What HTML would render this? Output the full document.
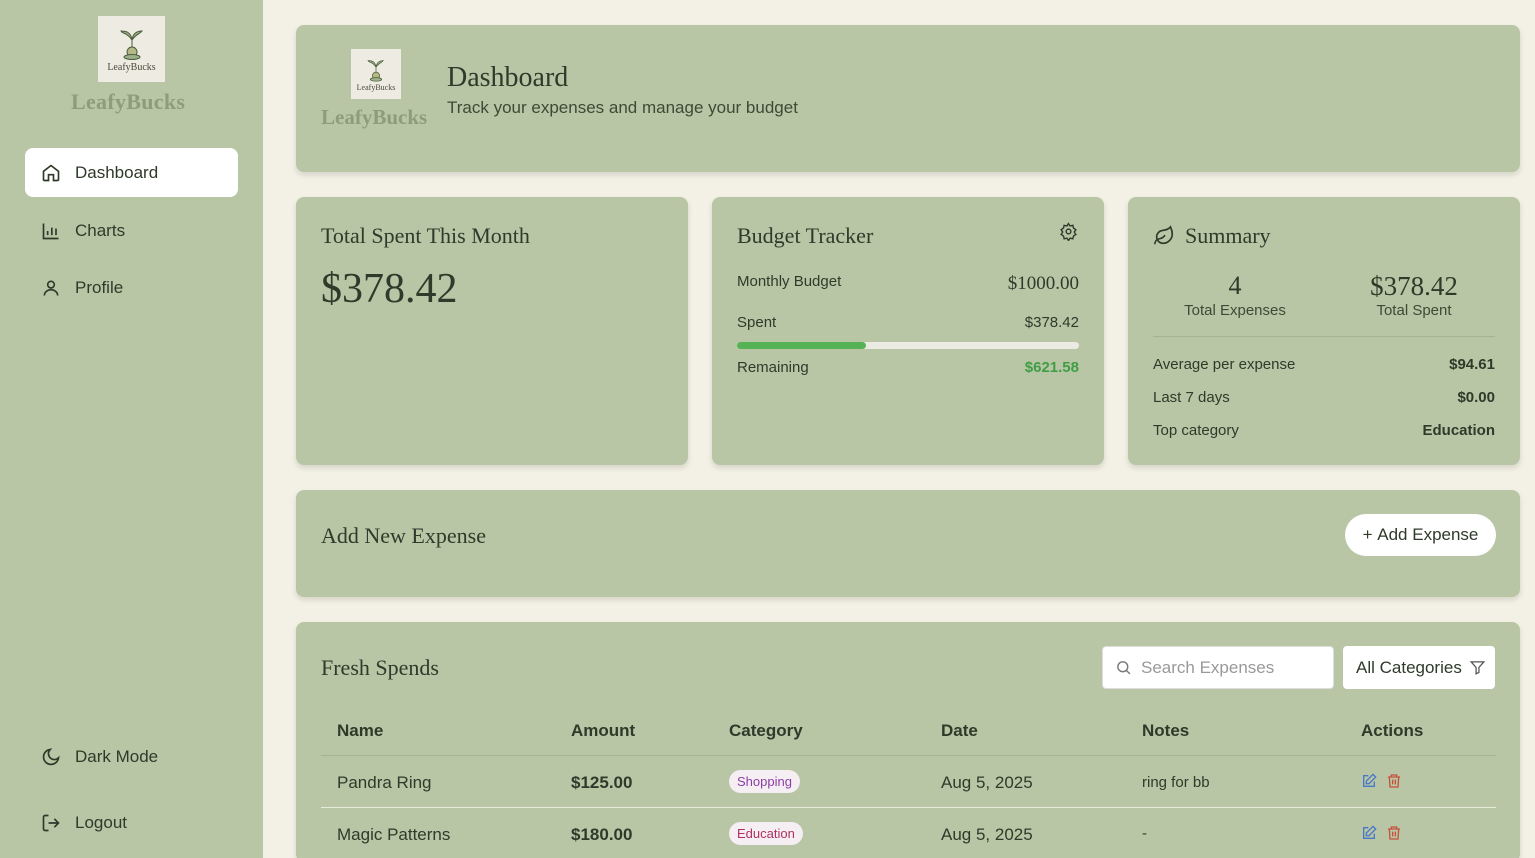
<!DOCTYPE html>
<html><head><meta charset="utf-8"><style>
*{box-sizing:border-box;margin:0;padding:0}
html{overflow:hidden;height:858px}
body{width:1535px;height:858px;overflow:hidden;background:#f3f1e5;font-family:"Liberation Sans",sans-serif;color:#2f3a2a;position:relative}
.serif{font-family:"Liberation Serif",serif}
.side{position:absolute;left:0;top:0;width:263px;height:858px;background:#b8c6a5}
.logo{position:absolute;background:#eeebe2;display:flex;flex-direction:column;align-items:center;justify-content:center}
.logo span{font-family:"Liberation Serif",serif;color:#4a4a3a}
.brand{position:absolute;font-family:"Liberation Serif",serif;font-weight:bold;color:#8d9d7b}
.nav{position:absolute;left:25px;width:213px;height:49px;border-radius:8px;display:flex;align-items:center;padding-left:16px;font-size:17px;color:#2f3a2a}
.nav svg{margin-right:14px}
.card{position:absolute;background:#b8c6a5;border-radius:8px;box-shadow:0 3px 6px rgba(0,0,0,.12)}
.abs{position:absolute}
.row{position:absolute;left:25px;right:25px;display:flex;justify-content:space-between;font-size:15px}
.th{position:absolute;top:721px;font-size:17px;font-weight:bold;color:#2f3a2a}
.td{position:absolute;font-size:17px}
.tag{position:absolute;font-size:13px;padding:4px 8px;border-radius:12px;background:#f5eef2}
</style></head><body>
<div class="side">
 <div class="logo" style="left:98px;top:16px;width:67px;height:66px">
  <svg width="30" height="36" viewBox="0 0 30 36"><path d="M15 26V12M15 14C10 6 5 8 4 5c5 0 10 1 11 9M15 14c4-6 8-6 10-9-5 0-9 2-10 9" fill="#9db08a" stroke="#4a5a3a" stroke-width="1"/><circle cx="15" cy="26" r="5" fill="#b5b985" stroke="#4a5a3a"/><ellipse cx="15" cy="31" rx="8" ry="2.5" fill="#9db08a" stroke="#4a5a3a"/></svg>
  <span style="font-size:10px">LeafyBucks</span></div>
 <div class="brand" style="left:71px;top:89px;font-size:22px;letter-spacing:0.3px">LeafyBucks</div>
 <div class="nav" style="top:148px;background:#fff">
  <svg width="20" height="20" viewBox="0 0 24 24" fill="none" stroke="#2f3a2a" stroke-width="2"><path d="M3 10l9-7 9 7v10a1 1 0 0 1-1 1h-5v-7h-6v7H4a1 1 0 0 1-1-1z"/></svg>Dashboard</div>
 <div class="nav" style="top:206px"><svg width="20" height="20" viewBox="0 0 24 24" fill="none" stroke="#2f3a2a" stroke-width="2"><path d="M3 3v18h18M8 17v-5M13 17V8M18 17v-8"/></svg>Charts</div>
 <div class="nav" style="top:263px"><svg width="20" height="20" viewBox="0 0 24 24" fill="none" stroke="#2f3a2a" stroke-width="2"><circle cx="12" cy="8" r="4"/><path d="M4 21c0-4 4-7 8-7s8 3 8 7"/></svg>Profile</div>
 <div class="nav" style="top:732px"><svg width="20" height="20" viewBox="0 0 24 24" fill="none" stroke="#2f3a2a" stroke-width="2"><path d="M21 13A9 9 0 1 1 11 3a7 7 0 0 0 10 10z"/></svg>Dark Mode</div>
 <div class="nav" style="top:798px"><svg width="20" height="20" viewBox="0 0 24 24" fill="none" stroke="#2f3a2a" stroke-width="2"><path d="M9 21H5a2 2 0 0 1-2-2V5a2 2 0 0 1 2-2h4M16 17l5-5-5-5M21 12H9"/></svg>Logout</div>
</div>

<div class="card" style="left:296px;top:25px;width:1224px;height:147px">
 <div class="logo" style="left:55px;top:24px;width:50px;height:50px">
  <svg width="22" height="26" viewBox="0 0 30 36"><path d="M15 26V12M15 14C10 6 5 8 4 5c5 0 10 1 11 9M15 14c4-6 8-6 10-9-5 0-9 2-10 9" fill="#9db08a" stroke="#4a5a3a" stroke-width="1"/><circle cx="15" cy="26" r="5" fill="#b5b985" stroke="#4a5a3a"/><ellipse cx="15" cy="31" rx="8" ry="2.5" fill="#9db08a" stroke="#4a5a3a"/></svg>
  <span style="font-size:8px">LeafyBucks</span></div>
 <div class="brand" style="left:25px;top:80px;font-size:21px">LeafyBucks</div>
 <div class="abs serif" style="left:151px;top:37px;font-size:28px">Dashboard</div>
 <div class="abs" style="left:151px;top:73px;font-size:17px;color:#3d4a35">Track your expenses and manage your budget</div>
</div>

<div class="card" style="left:296px;top:197px;width:392px;height:268px">
 <div class="abs serif" style="left:25px;top:26px;font-size:22px">Total Spent This Month</div>
 <div class="abs serif" style="left:25px;top:68px;font-size:42px">$378.42</div>
</div>

<div class="card" style="left:712px;top:197px;width:392px;height:268px">
 <div class="abs serif" style="left:25px;top:26px;font-size:22px">Budget Tracker</div>
 <svg class="abs" style="left:347px;top:25px" width="19" height="19" viewBox="0 0 24 24" fill="none" stroke="#2f3a2a" stroke-width="1.8"><circle cx="12" cy="12" r="3"/><path d="M12 2l2 3 3.5-.8.8 3.5 3 2-2 3 2 3-3 2-.8 3.5-3.5-.8-2 3-2-3-3.5.8-.8-3.5-3-2 2-3-2-3 3-2 .8-3.5 3.5.8z"/></svg>
 <div class="row" style="top:76px"><span>Monthly Budget</span><span class="serif" style="font-size:19px">$1000.00</span></div>
 <div class="row" style="top:117px"><span>Spent</span><span>$378.42</span></div>
 <div class="abs" style="left:25px;top:145px;width:342px;height:7px;border-radius:4px;background:#ecebe3"><div style="width:129px;height:7px;border-radius:4px;background:#55b255"></div></div>
 <div class="row" style="top:162px"><span>Remaining</span><span style="color:#3f9e45;font-weight:bold">$621.58</span></div>
</div>

<div class="card" style="left:1128px;top:197px;width:392px;height:268px">
 <svg class="abs" style="left:25px;top:28px" width="22" height="22" viewBox="0 0 24 24" fill="none" stroke="#2f3a2a" stroke-width="1.8"><path d="M11 20A7 7 0 0 1 9.8 6.1C15.5 5 17 4.5 19 2c1 2 2 4.2 2 8 0 5.5-4.8 10-10 10z"/><path d="M2 21c0-3 1.9-5.4 5-6 2.5-.5 5-2 6-4"/></svg>
 <div class="abs serif" style="left:57px;top:26px;font-size:22px">Summary</div>
 <div class="abs serif" style="left:57px;top:74px;width:100px;text-align:center;font-size:26px">4</div>
 <div class="abs" style="left:37px;top:105px;width:140px;text-align:center;font-size:15px;color:#3d4a35">Total Expenses</div>
 <div class="abs serif" style="left:216px;top:74px;width:140px;text-align:center;font-size:27px">$378.42</div>
 <div class="abs" style="left:226px;top:105px;width:120px;text-align:center;font-size:15px;color:#3d4a35">Total Spent</div>
 <div class="abs" style="left:25px;right:25px;top:139px;border-top:1px solid #a5b391"></div>
 <div class="row" style="top:159px"><span>Average per expense</span><b>$94.61</b></div>
 <div class="row" style="top:192px"><span>Last 7 days</span><b>$0.00</b></div>
 <div class="row" style="top:225px"><span>Top category</span><b>Education</b></div>
</div>

<div class="card" style="left:296px;top:490px;width:1224px;height:107px">
 <div class="abs serif" style="left:25px;top:33px;font-size:22px">Add New Expense</div>
 <div class="abs" style="left:1049px;top:24px;width:151px;height:42px;background:#fff;border-radius:21px;font-size:17px;display:flex;align-items:center;justify-content:center">+&nbsp;Add Expense</div>
</div>

<div class="card" style="left:296px;top:622px;width:1224px;height:240px">
 <div class="abs serif" style="left:25px;top:33px;font-size:22px">Fresh Spends</div>
 <div class="abs" style="left:806px;top:24px;width:232px;height:43px;background:#fff;border-radius:4px;border:1px solid #ddd;font-size:17px;color:#999;display:flex;align-items:center;padding-left:12px">
  <svg width="17" height="17" viewBox="0 0 24 24" fill="none" stroke="#777" stroke-width="2" style="margin-right:9px"><circle cx="11" cy="11" r="7"/><path d="M21 21l-5-5"/></svg>Search Expenses</div>
 <div class="abs" style="left:1047px;top:24px;width:152px;height:43px;background:#fff;border-radius:4px;font-size:17px;display:flex;align-items:center;padding-left:13px">All Categories
  <svg width="17" height="17" viewBox="0 0 24 24" fill="none" stroke="#555" stroke-width="1.8" style="margin-left:7px"><path d="M3 4h18l-7 8v7l-4 2v-9z"/></svg></div>
</div>
<div class="th" style="left:337px">Name</div><div class="th" style="left:571px">Amount</div><div class="th" style="left:729px">Category</div><div class="th" style="left:941px">Date</div><div class="th" style="left:1142px">Notes</div><div class="th" style="left:1361px">Actions</div>
<div class="abs" style="left:321px;width:1175px;top:755px;border-top:1px solid #a5b391"></div>
<div class="abs" style="left:321px;width:1175px;top:807px;border-top:1px solid #e6ebdc"></div>
<div class="td" style="left:337px;top:773px">Pandra Ring</div><div class="td" style="left:571px;top:773px;font-weight:bold">$125.00</div>
<div class="tag" style="left:729px;top:770px;color:#8a3fa6">Shopping</div>
<div class="td" style="left:941px;top:773px">Aug 5, 2025</div><div class="td" style="left:1142px;top:774px;font-size:15px">ring for bb</div>
<div class="td" style="left:337px;top:825px">Magic Patterns</div><div class="td" style="left:571px;top:825px;font-weight:bold">$180.00</div>
<div class="tag" style="left:729px;top:822px;color:#b03060">Education</div>
<div class="td" style="left:941px;top:825px">Aug 5, 2025</div><div class="td" style="left:1142px;top:825px;font-size:15px">-</div>
<svg class="abs" style="left:1361px;top:773px" width="16" height="16" viewBox="0 0 24 24" fill="none" stroke="#4a78c8" stroke-width="2"><path d="M11 4H4v16h16v-7M18 2l4 4-10 10H8v-4z"/></svg>
<svg class="abs" style="left:1386px;top:773px" width="16" height="16" viewBox="0 0 24 24" fill="none" stroke="#c8503a" stroke-width="2"><path d="M3 6h18M8 6V3h8v3M5 6l1 15h12l1-15M10 10v7M14 10v7"/></svg>
<svg class="abs" style="left:1361px;top:825px" width="16" height="16" viewBox="0 0 24 24" fill="none" stroke="#4a78c8" stroke-width="2"><path d="M11 4H4v16h16v-7M18 2l4 4-10 10H8v-4z"/></svg>
<svg class="abs" style="left:1386px;top:825px" width="16" height="16" viewBox="0 0 24 24" fill="none" stroke="#c8503a" stroke-width="2"><path d="M3 6h18M8 6V3h8v3M5 6l1 15h12l1-15M10 10v7M14 10v7"/></svg>
</body></html>
